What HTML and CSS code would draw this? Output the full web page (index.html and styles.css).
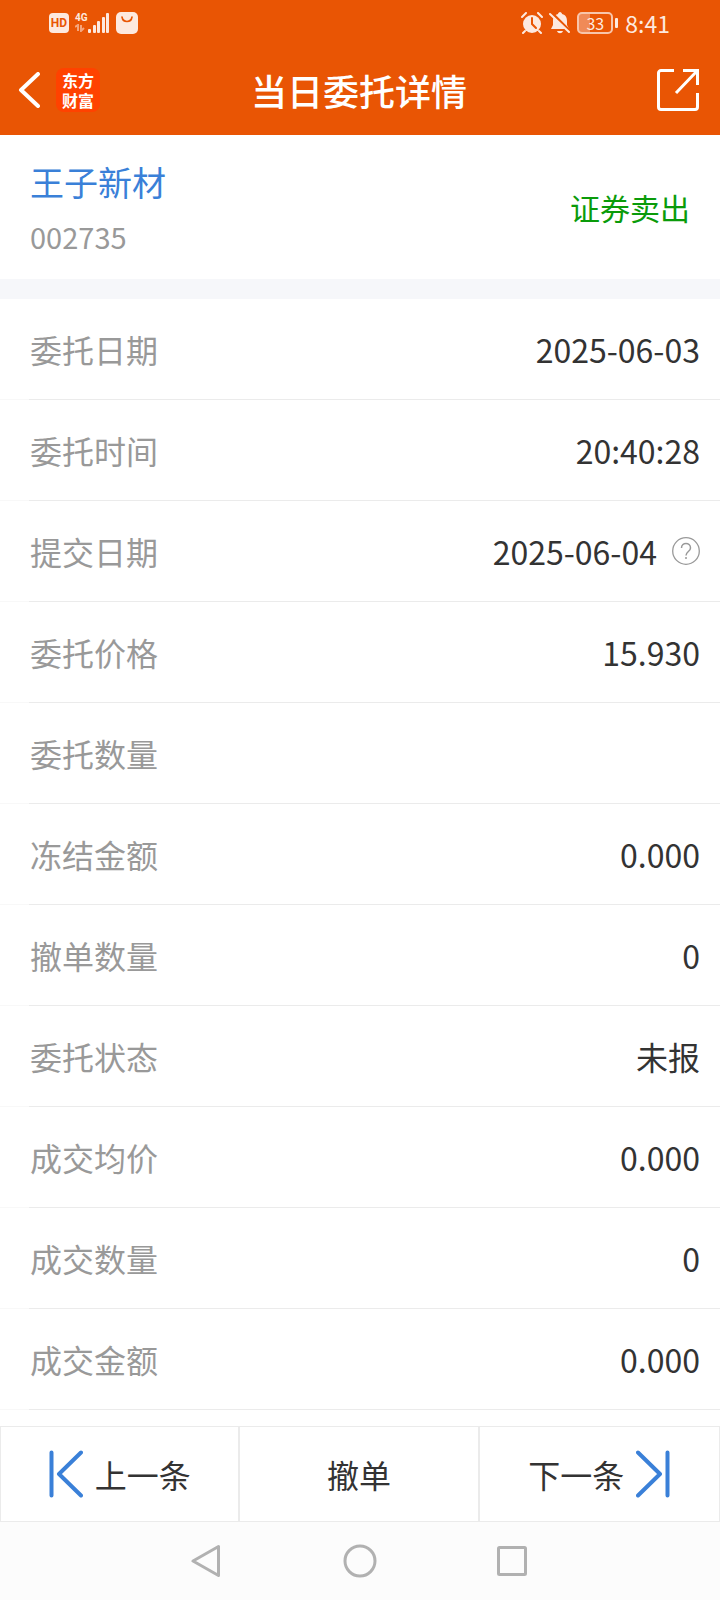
FILE: index.html
```html
<!DOCTYPE html>
<html lang="zh-CN">
<head>
    <meta charset="UTF-8">
    <meta name="viewport" content="width=device-width, initial-scale=1.0">
    <title>当日委托详情</title>
    <link rel="stylesheet" href="styles.css">
</head>
<body>
    <header class="header">
        <div class="status-bar">
            <div class="status-left">
                <span class="hd">HD</span>
                <div class="signal">
                    <div class="network">
                        <span>4G</span>
                        <svg width="10" height="8" viewBox="0 0 10 8" fill="none" stroke="#f5a57c" stroke-width="2"><path d="M0 3l3-2v6M6 1v6l3-3"/></svg>
                    </div>
                    <svg width="22" height="22" viewBox="0 0 22 22" fill="#fde9df">
                        <rect x="0" y="17" width="3" height="4" rx="1"/>
                        <rect x="5" y="13" width="3" height="8" rx="1"/>
                        <rect x="9" y="9" width="3" height="12" rx="1"/>
                        <rect x="14" y="5" width="3" height="16" rx="1"/>
                        <rect x="18" y="1" width="3" height="20" rx="1"/>
                    </svg>
                </div>
                <svg class="bag" width="22" height="22" viewBox="0 0 22 22"><rect width="22" height="22" rx="5" fill="#fde9df"/><path d="M6 5c1 6 9 6 10 0" fill="none" stroke="#e95504" stroke-width="1.6" stroke-linecap="round"/></svg>
            </div>
            <div class="status-right">
                <svg width="22" height="22" viewBox="0 0 22 22">
                    <circle cx="11" cy="12" r="9" fill="#fde9df"/>
                    <path d="M1 5l4-4M21 5l-4-4M4 19l-2 2M18 19l2 2" stroke="#fde9df" stroke-width="2" stroke-linecap="round"/>
                    <path d="M11 6v6l4 4" fill="none" stroke="#e95504" stroke-width="2" stroke-linecap="round"/>
                </svg>
                <svg class="bell" width="22" height="22" viewBox="0 0 22 22">
                    <path d="M11 0c1 0 2 1 2 2 4 1 5 4 5 7v4l2 4H2l2-4V9c0-3 1-6 5-7 0-1 1-2 2-2zM8 19h6c-1 3-5 3-6 0z" fill="#fde9df"/>
                    <path d="M2 0l20 20" stroke="#e95504" stroke-width="2.5"/>
                    <path d="M1 2l19 18" stroke="#fde9df" stroke-width="2" stroke-linecap="round"/>
                </svg>
                <span class="battery">33</span>
                <span class="time">8:41</span>
            </div>
        </div>
        <div class="title-bar">
            <div class="title-left">
                <button type="button" class="icon-button" aria-label="返回">
                    <svg width="22" height="36" viewBox="0 0 22 36" fill="none" stroke="#fff" stroke-width="4" stroke-linecap="round" stroke-linejoin="round"><path d="M20 2L3 18l17 16"/></svg>
                </button>
                <div class="logo">
                    <div>东方</div>
                    <div>财富</div>
                </div>
            </div>
            <h1 class="title">当日委托详情</h1>
            <button type="button" class="icon-button share" aria-label="分享">
                <svg width="44" height="44" viewBox="0 0 44 44" fill="none" stroke="#fff" stroke-width="3"><path d="M18 2.500H5a2.500 2.500 0 0 0-2.500 2.500v34A2.500 2.500 0 0 0 5 41.500h34a2.500 2.500 0 0 0 2.500-2.500V25M27 2.500h14.500V17M41 3L20 25"/></svg>
            </button>
        </div>
    </header>

    <main class="main">
        <section class="summary">
            <div class="stock">
                <a href="#" class="stock-name">王子新材</a>
                <div class="stock-code">002735</div>
            </div>
            <div class="direction">证券卖出</div>
        </section>

        <dl class="details">
            <div class="row"><dt>委托日期</dt><dd>2025-06-03</dd></div>
            <div class="row"><dt>委托时间</dt><dd>20:40:28</dd></div>
            <div class="row">
                <dt>提交日期</dt>
                <dd>2025-06-04
                    <button type="button" class="help" aria-label="说明">
                        <svg width="28" height="28" viewBox="0 0 28 28" fill="none" stroke="#999" stroke-width="1.3"><circle cx="14" cy="14" r="13.300"/><path d="M9.500 11c0-6 9-6 9 0 0 3.500-4.500 3.500-4.500 7.500" stroke-width="1.500"/><circle cx="14" cy="21" r="1" fill="#999" stroke="none"/></svg>
                    </button>
                </dd>
            </div>
            <div class="row"><dt>委托价格</dt><dd>15.930</dd></div>
            <div class="row"><dt>委托数量</dt><dd></dd></div>
            <div class="row"><dt>冻结金额</dt><dd>0.000</dd></div>
            <div class="row"><dt>撤单数量</dt><dd>0</dd></div>
            <div class="row"><dt>委托状态</dt><dd>未报</dd></div>
            <div class="row"><dt>成交均价</dt><dd>0.000</dd></div>
            <div class="row"><dt>成交数量</dt><dd>0</dd></div>
            <div class="row"><dt>成交金额</dt><dd>0.000</dd></div>
        </dl>
    </main>

    <footer class="footer">
        <div class="actions">
            <button type="button" class="action">
                <svg width="34" height="48" viewBox="0 0 34 48" fill="none" stroke="#3a80d8" stroke-width="4" stroke-linecap="round" stroke-linejoin="round"><path d="M2.500 2.500v43M32 2.500L10 24l22 21.500"/></svg>
                上一条
            </button>
            <button type="button" class="action">撤单</button>
            <button type="button" class="action">
                下一条
                <svg width="34" height="48" viewBox="0 0 34 48" fill="none" stroke="#3a80d8" stroke-width="4" stroke-linecap="round" stroke-linejoin="round"><path d="M31.500 2.500v43M2 2.500L24 24 2 45.500"/></svg>
            </button>
        </div>
        <nav class="system-nav">
            <button type="button" class="icon-button" aria-label="后退">
                <svg width="32" height="34" viewBox="0 0 32 34" fill="none" stroke="#b1b1b1" stroke-width="3" stroke-linejoin="round"><path d="M27.500 2.500v29L2 17z"/></svg>
            </button>
            <button type="button" class="icon-button" aria-label="主页">
                <svg width="34" height="34" viewBox="0 0 34 34" fill="none" stroke="#b1b1b1" stroke-width="3"><circle cx="17" cy="17" r="15"/></svg>
            </button>
            <button type="button" class="icon-button" aria-label="最近任务">
                <svg width="32" height="32" viewBox="0 0 32 32" fill="none" stroke="#b1b1b1" stroke-width="3"><rect x="1.500" y="2.500" width="27" height="27" rx="1"/></svg>
            </button>
        </nav>
    </footer>
</body>
</html>
```

FILE: styles.css
```css
* {
    box-sizing: border-box;
}
body {
    display: flex;
    flex-direction: column;
    min-height: 100vh;
    margin: 0;
    font-family: "Noto Sans CJK SC", sans-serif;
    font-size: 32px;
    color: #333;
    background-color: #fff;
}
button {
    padding: 0;
    border: none;
    background: none;
    color: inherit;
    font: inherit;
    cursor: pointer;
}
svg {
    display: block;
}
.header {
    color: #fff;
    background-color: #e95504;
}
.status-bar {
    display: flex;
    justify-content: space-between;
    height: 46px;
    padding: 0 50px 0 49px;
    color: #fde9df;
}
.status-left,
.status-right {
    display: flex;
    align-items: center;
    gap: 6px;
}
.hd {
    width: 20px;
    border-radius: 4px;
    background-color: #fde9df;
    color: #e95504;
    font: bold 12px/20px Roboto, sans-serif;
    text-align: center;
}
.signal {
    display: flex;
}
.network {
    font: bold 10px/12px Roboto, sans-serif;
}
.battery {
    position: relative;
    width: 36px;
    margin-right: 6px;
    border: 2px solid #f8c5aa;
    border-radius: 5px;
    background: linear-gradient(to right, #f08a57 33%, transparent 33%);
    font-size: 16px;
    line-height: 18px;
    text-align: center;
}
.battery::after {
    content: "";
    position: absolute;
    top: 4px;
    right: -7px;
    width: 3px;
    height: 10px;
    border-radius: 1px;
    background-color: #fde9df;
}
.time {
    font-size: 23px;
    line-height: 24px;
}
.title-bar {
    display: grid;
    grid-template-columns: 1fr auto 1fr;
    align-items: center;
    height: 89px;
    padding: 0 20px 2px 18px;
}
.title-left {
    display: flex;
    align-items: center;
    gap: 16px;
}
.logo {
    width: 44px;
    padding: 2px 0;
    border-radius: 8px;
    background-color: #ff4200;
    font-size: 16px;
    font-weight: bold;
    line-height: 20px;
    text-align: center;
}
.title {
    margin: 0;
    font-size: 36px;
    font-weight: 500;
    line-height: 48px;
}
.share {
    justify-self: end;
}
.summary {
    display: flex;
    justify-content: space-between;
    align-items: center;
    height: 164px;
    padding: 0 30px;
    border-bottom: 20px solid #f6f7fa;
}
.stock {
    padding-top: 4px;
}
.stock-name {
    display: block;
    color: #3a80d8;
    font-size: 34px;
    line-height: 54px;
    text-decoration: none;
}
.stock-code {
    color: #999;
    font-size: 29px;
    line-height: 54px;
}
.direction {
    color: #0a9b0a;
    font-size: 30px;
}
.details {
    margin: 0;
}
.row {
    display: flex;
    justify-content: space-between;
    align-items: center;
    height: 101px;
    padding: 0 20px 0 30px;
    border-bottom: 1px solid #ebebeb;
    border-image: linear-gradient(to right, #f8f8f8 30px, #ebebeb 30px) 1;
}
.row dt {
    color: #999;
}
.row dd {
    display: flex;
    align-items: center;
    gap: 15px;
    margin: 0;
}
.footer {
    margin-top: auto;
}
.actions {
    display: grid;
    grid-template-columns: repeat(3, 1fr);
    height: 96px;
    border: 1px solid #ebebeb;
}
.action {
    display: flex;
    justify-content: center;
    align-items: center;
    gap: 12px;
    border-right: 2px solid #ebebeb;
}
.action:last-child {
    border-right: none;
}
.system-nav {
    display: flex;
    justify-content: center;
    align-items: center;
    gap: 120px;
    height: 78px;
    background-color: #fcfcfc;
}
```
